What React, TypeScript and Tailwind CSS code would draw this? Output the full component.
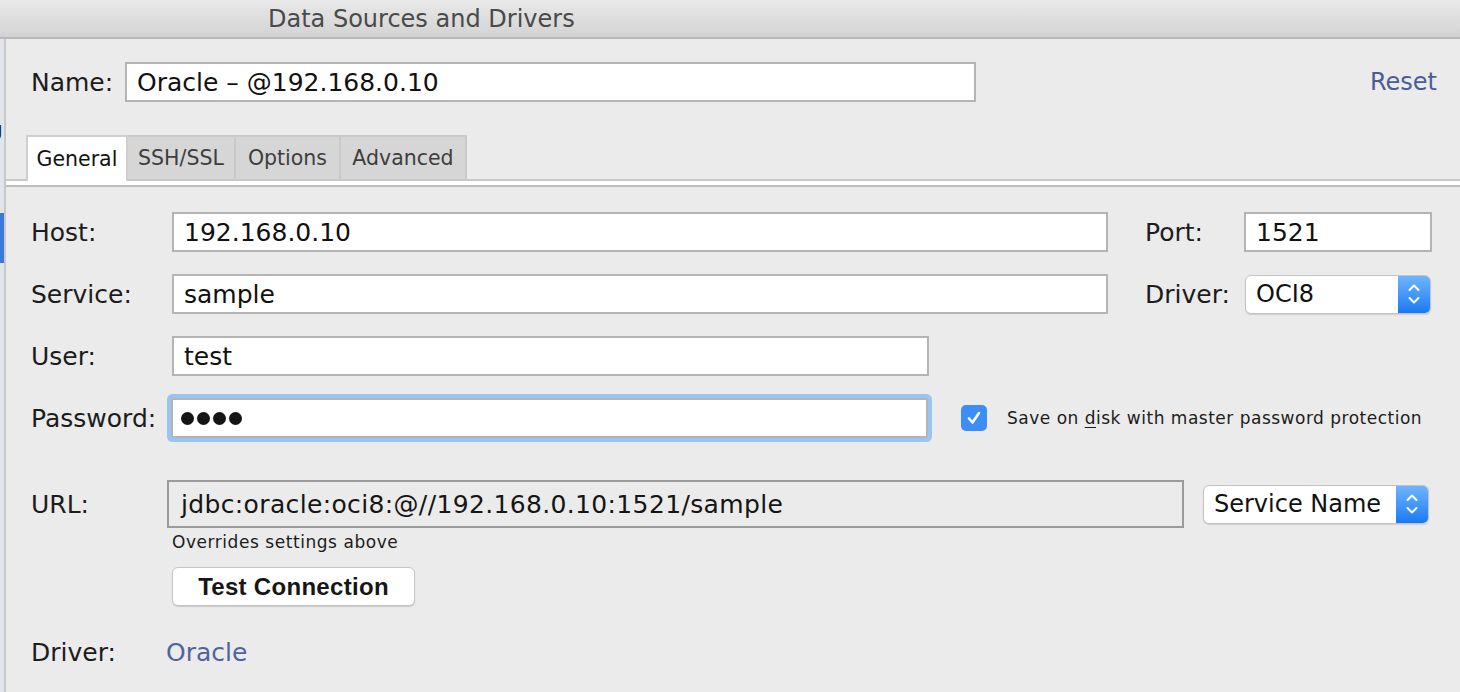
import { useState } from "react";

const LABEL = "text-[25px] text-[#1c1c1c] leading-none";

function Stepper() {
  return (
    <div className="w-[32px] self-stretch rounded-r-[5px] bg-gradient-to-b from-[#6db4fb] to-[#1579f5] flex items-center justify-center">
      <svg width="14" height="26" viewBox="0 0 14 26" fill="none" stroke="white" strokeWidth="2" strokeLinecap="round" strokeLinejoin="round">
        <path d="M2.5 9 L7 4.5 L11.5 9" />
        <path d="M2.5 17 L7 21.5 L11.5 17" />
      </svg>
    </div>
  );
}

function Select({ value, width, height }: { value: string; width: string; height: string }) {
  return (
    <div className={`${width} ${height} flex rounded-[6px] border border-[#c3c3c3] bg-white shadow-[0_1px_1px_rgba(0,0,0,0.12)]`}>
      <div className="flex-1 flex items-center pl-[10px] text-[24px] text-[#111] leading-none">{value}</div>
      <Stepper />
    </div>
  );
}

function TextBox({ value, width }: { value: string; width: string }) {
  return (
    <div className={`${width} h-[40px] bg-white border-2 border-[#b4b4b4] flex items-center pl-[10px] text-[25px] text-[#111] leading-none`}>
      {value}
    </div>
  );
}

const TABS = [
  { name: "General", w: "w-[102px]" },
  { name: "SSH/SSL", w: "w-[108px]" },
  { name: "Options", w: "w-[105px]" },
  { name: "Advanced", w: "w-[126px]" },
];

export default function App() {
  const [tab, setTab] = useState("General");
  const [save, setSave] = useState(true);

  return (
    <div
      className="w-[1460px] h-[692px] overflow-hidden bg-[#ebebeb] flex flex-col"
      style={{ fontFamily: '"DejaVu Sans", "Noto Sans", sans-serif' }}
    >
      <div className="h-[39px] shrink-0 bg-gradient-to-b from-[#e9e9e9] to-[#d3d3d3] border-b-2 border-[#b9b9b9] flex items-center">
        <span className="ml-[268px] text-[24px] text-[#4a4a4a] leading-none">
          Data Sources and Drivers
        </span>
      </div>

      <div className="flex-1 flex min-h-0">
        <div className="w-[6px] shrink-0 bg-[#e2e6ea] border-r-2 border-[#c8c8c8] flex flex-col overflow-hidden">
          <span className="mt-[80px] -ml-[10px] text-[20px] leading-none text-[#222]">g</span>
          <div className="mt-[74px] h-[50px] w-[4px] bg-[#3b78d8]" />
        </div>

        <div className="flex-1 flex flex-col">
          <div className="h-[40px] mt-[23px] flex items-center pl-[25px] pr-[23px]">
            <span className={`${LABEL} w-[94px]`}>Name:</span>
            <div className="w-[851px] h-[40px] bg-white border-2 border-[#b4b4b4] flex items-center pl-[10px] text-[25px] text-[#111] leading-none">
              Oracle – @192.168.0.10
            </div>
            <span className="ml-auto text-[24px] leading-none text-[#4b5c9c] cursor-pointer">Reset</span>
          </div>

          <div className="mt-[33px] flex items-end pl-[20px] border-b-2 border-[#c8c8c8]">
            {TABS.map((t) => {
              const active = t.name === tab;
              return (
                <button
                  key={t.name}
                  onClick={() => setTab(t.name)}
                  className={
                    active
                      ? `${t.w} h-[46px] bg-white border-2 border-b-0 border-[#cfcfcf] text-[20.5px] text-[#111] leading-none -mb-[2px]`
                      : `${t.w} h-[44px] bg-[#d6d6d6] border-2 border-b-0 border-l-0 border-[#c9c9c9] text-[20.5px] text-[#3e3e3e] leading-none`
                  }
                >
                  {t.name}
                </button>
              );
            })}
          </div>
          <div className="h-[6px] bg-white border-b-2 border-[#bdbdbd]" />

          <div className="flex flex-col pl-[25px] mt-[25px] gap-[22px]">
            <div className="flex items-center h-[40px]">
              <span className={`${LABEL} w-[141px]`}>Host:</span>
              <TextBox value="192.168.0.10" width="w-[936px]" />
              <span className={`${LABEL} ml-[37px] w-[99px]`}>Port:</span>
              <TextBox value="1521" width="w-[188px]" />
            </div>

            <div className="flex items-center h-[40px]">
              <span className={`${LABEL} w-[141px]`}>Service:</span>
              <TextBox value="sample" width="w-[936px]" />
              <span className={`${LABEL} ml-[37px] w-[100px]`}>Driver:</span>
              <Select value="OCI8" width="w-[186px]" height="h-[39px]" />
            </div>

            <div className="flex items-center h-[40px]">
              <span className={`${LABEL} w-[141px]`}>User:</span>
              <TextBox value="test" width="w-[757px]" />
            </div>

            <div className="flex items-center h-[40px]">
              <span className={`${LABEL} w-[140px]`}>Password:</span>
              <div className="w-[757px] h-[40px] bg-white border-2 border-[#b4b4b4] shadow-[0_0_0_4px_#9cc4f2] rounded-[2px] flex items-center pl-[8px] gap-[3px]">
                {[0, 1, 2, 3].map((i) => (
                  <span key={i} className="w-[13px] h-[13px] rounded-full bg-[#151515]" />
                ))}
              </div>
              <button
                onClick={() => setSave(!save)}
                className={`ml-[33px] w-[26px] h-[26px] rounded-[5px] flex items-center justify-center ${save ? "bg-[#3c8ef6]" : "bg-white border border-[#aaa]"}`}
              >
                {save && (
                  <svg width="18" height="18" viewBox="0 0 18 18" fill="none" stroke="white" strokeWidth="2.6" strokeLinecap="round" strokeLinejoin="round">
                    <path d="M4 9.5 L7.5 13.5 L14 4" />
                  </svg>
                )}
              </button>
              <span className="ml-[20px] text-[17px] leading-none text-[#1c1c1c] tracking-[0.5px]">
                Save on <span className="underline underline-offset-[3px]">d</span>isk with master password protection
              </span>
            </div>
          </div>

          <div className="flex items-center pl-[25px] mt-[42px]">
            <span className={`${LABEL} w-[136px]`}>URL:</span>
            <div className="w-[1017px] h-[48px] border-2 border-[#9b9b9b] flex items-center pl-[12px] text-[25px] text-[#151515] leading-none tracking-[0.35px]">
              jdbc:oracle:oci8:@//192.168.0.10:1521/sample
            </div>
            <div className="ml-[19px]">
              <Select value="Service Name" width="w-[226px]" height="h-[39px]" />
            </div>
          </div>

          <div className="pl-[166px] mt-[6px] text-[17px] leading-none text-[#1c1c1c] tracking-[0.55px]">
            Overrides settings above
          </div>

          <div className="pl-[166px] mt-[16px]">
            <button
              className="w-[243px] h-[39px] rounded-[6px] bg-white border border-[#c5c5c5] shadow-[0_1px_1px_rgba(0,0,0,0.15)] text-[24px] font-semibold text-[#161616] leading-none tracking-[0.3px]"
              style={{ fontFamily: '"Liberation Sans", Arial, sans-serif' }}
            >
              Test Connection
            </button>
          </div>

          <div className="flex items-center pl-[25px] mt-[34px]">
            <span className={`${LABEL} w-[135px]`}>Driver:</span>
            <span className="text-[25px] leading-none text-[#5063a0] cursor-pointer">Oracle</span>
          </div>
        </div>
      </div>
    </div>
  );
}
